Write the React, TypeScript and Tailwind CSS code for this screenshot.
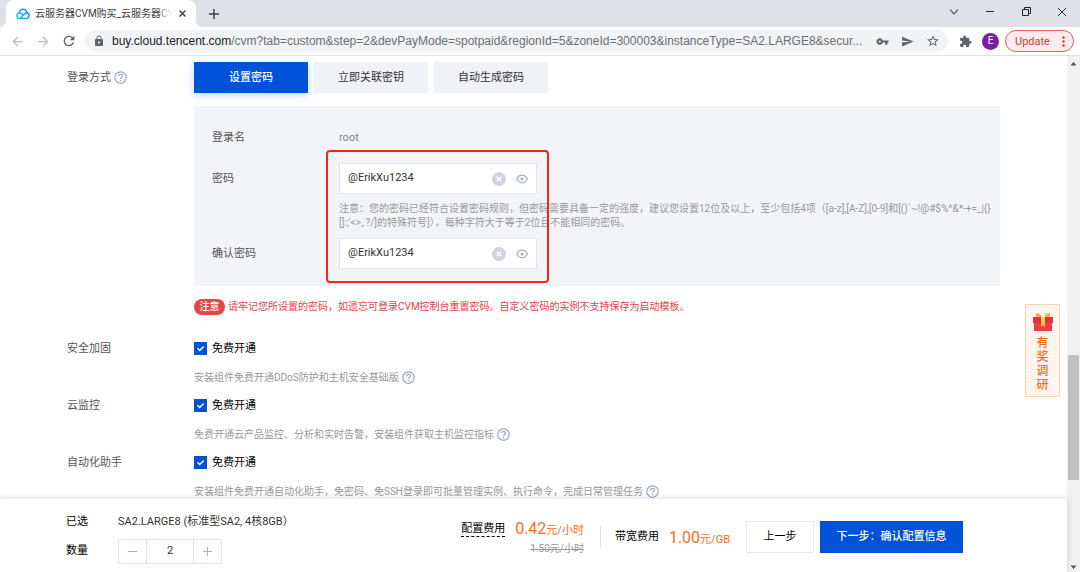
import { useState } from 'react';
import {
  MdArrowBack,
  MdArrowForward,
  MdExtension,
  MdLock,
  MdRefresh,
  MdSend,
  MdStarBorder,
  MdVpnKey,
} from 'react-icons/md';

const loginTabs = ['设置密码', '立即关联密钥', '自动生成密码'];

const services = [
  { name: '安全加固', note: '安装组件免费开通DDoS防护和主机安全基础版' },
  { name: '云监控', note: '免费开通云产品监控、分析和实时告警，安装组件获取主机监控指标' },
  { name: '自动化助手', note: '安装组件免费开通自动化助手，免密码、免SSH登录即可批量管理实例、执行命令，完成日常管理任务' },
];

function CloudLogo() {
  return (
    <svg width="14" height="12" viewBox="0 0 28 24" fill="none" className="shrink-0">
      <defs>
        <linearGradient id="cloud" x1="0" y1="24" x2="28" y2="0" gradientUnits="userSpaceOnUse">
          <stop offset="0" stopColor="#1fd0f5" />
          <stop offset="1" stopColor="#1672f3" />
        </linearGradient>
      </defs>
      <path
        d="M6.500 10C7 5.500 10 2.500 14 2.500s7 2.500 7.500 7c3 .5 4.500 2.800 4.500 5.500 0 3.500-2.200 6-5.500 6H7.500C4 21 2 18.500 2 15.500 2 12 4 10 7 10c2.500 0 4 1 5.500 2.500L15 15M8 20.500l9.500-9C18.500 10.500 20 9.800 21.500 9.800"
        stroke="url(#cloud)"
        strokeWidth="3"
        strokeLinejoin="round"
      />
    </svg>
  );
}

function HelpIcon() {
  return (
    <svg width="13" height="13" viewBox="0 0 26 26" fill="none" stroke="#a3abc2" strokeWidth="2.5" className="shrink-0">
      <circle cx="13" cy="13" r="11.500" />
      <path d="M9 10.500C9 8 10.800 6.500 13 6.500s4 1.500 4 3.700c0 3-4 2.800-4 5.800" />
      <path d="M13 18v2.500" />
    </svg>
  );
}

function TitleBar() {
  return (
    <div className="flex h-[27px] items-stretch bg-[#dee1e6] pl-1.5">
      <div className="relative flex w-[190px] items-center rounded-t-lg bg-white pl-2.5 pr-2">
        <svg width="6" height="6" viewBox="0 0 6 6" className="absolute bottom-0 -left-1.5">
          <path d="M6 0v6H0a6 6 0 0 0 6-6z" fill="#fff" />
        </svg>
        <svg width="6" height="6" viewBox="0 0 6 6" className="absolute bottom-0 -right-1.5">
          <path d="M0 0v6h6a6 6 0 0 1-6-6z" fill="#fff" />
        </svg>
        <CloudLogo />
        <div className="relative ml-[5px] mr-1 flex-1 overflow-hidden text-[10px] whitespace-nowrap text-[#3c4043]">
          云服务器CVM购买_云服务器CVM
          <div className="absolute inset-y-0 right-0 w-4 bg-linear-to-r from-transparent to-white" />
        </div>
        <button aria-label="关闭标签页" className="flex h-4 w-3 items-center justify-center">
          <svg width="7" height="7" viewBox="0 0 7 7" stroke="#3c4043" strokeWidth="1.400">
            <path d="M.5.5l6 6M6.500.5l-6 6" />
          </svg>
        </button>
      </div>
      <button aria-label="新标签页" className="flex w-9 items-center justify-center">
        <svg width="10" height="10" viewBox="0 0 10 10" stroke="#3c4043" strokeWidth="1.500">
          <path d="M5 0v10M0 5h10" />
        </svg>
      </button>
      <div className="ml-auto flex h-[23px] text-[#202124]">
        <button aria-label="搜索标签页" className="flex w-9 items-center justify-center">
          <svg width="10" height="6" viewBox="0 0 10 6" fill="none" stroke="#5f6368" strokeWidth="1.200">
            <path d="M1 .5l4 4.500L9 .5" />
          </svg>
        </button>
        <button aria-label="最小化" className="flex w-9 items-center justify-center">
          <svg width="8" height="8" viewBox="0 0 8 8" stroke="currentColor">
            <path d="M0 3.500h8" />
          </svg>
        </button>
        <button aria-label="还原" className="flex w-9 items-center justify-center">
          <svg width="9" height="9" viewBox="0 0 9 9" fill="none" stroke="currentColor">
            <path d="M.5 2.500h6v6h-6zM2.500 2.500v-2h6v6h-2" />
          </svg>
        </button>
        <button aria-label="关闭" className="flex w-9 items-center justify-center">
          <svg width="8" height="8" viewBox="0 0 8 8" stroke="currentColor" strokeWidth=".9">
            <path d="M0 0l8 8M8 0L0 8" />
          </svg>
        </button>
      </div>
    </div>
  );
}

function Toolbar() {
  return (
    <div className="flex h-[29px] items-center border-b border-[#dfe1e4] bg-white pr-1.5 pl-1 text-[#5f6368]">
      <button aria-label="后退" className="flex w-[26px] justify-center text-[#b7babd]">
        <MdArrowBack size={15} />
      </button>
      <button aria-label="前进" className="flex w-[26px] justify-center text-[#b7babd]">
        <MdArrowForward size={15} />
      </button>
      <button aria-label="刷新" className="flex w-[26px] justify-center">
        <MdRefresh size={16} />
      </button>
      <div className="ml-[3px] flex h-[22px] min-w-0 flex-1 items-center rounded-full bg-[#f1f3f4] px-2">
        <MdLock size={12} className="shrink-0" />
        <div className="ml-[7px] min-w-0 flex-1 truncate font-['Liberation_Sans',sans-serif] text-xs text-[#6b6f73]">
          <span className="text-[#202124]">buy.cloud.tencent.com</span>
          /cvm?tab=custom&amp;step=2&amp;devPayMode=spotpaid&amp;regionId=5&amp;zoneId=300003&amp;instanceType=SA2.LARGE8&amp;secur...
        </div>
        <div className="ml-2 flex items-center gap-3">
          <button aria-label="密码">
            <MdVpnKey size={13} />
          </button>
          <button aria-label="分享">
            <MdSend size={13} />
          </button>
          <button aria-label="收藏">
            <MdStarBorder size={14} />
          </button>
        </div>
      </div>
      <button aria-label="扩展程序" className="ml-[11px]">
        <MdExtension size={13} />
      </button>
      <button className="ml-2.5 size-[17px] rounded-full bg-[#7b1fa2] text-[10px] leading-none text-white">E</button>
      <button className="ml-1.5 flex h-[22px] w-[69px] items-center justify-between rounded-full border border-[#d9655d] bg-[#fcebea] pr-2 pl-[9px] text-[11px] text-[#d23f36]">
        <span className="pt-0.5">Update</span>
        <svg width="3" height="11" viewBox="0 0 3 11" fill="currentColor">
          <circle cx="1.500" cy="1.500" r="1.200" />
          <circle cx="1.500" cy="5.500" r="1.200" />
          <circle cx="1.500" cy="9.500" r="1.200" />
        </svg>
      </button>
    </div>
  );
}

function PasswordField({ id }: { id: string }) {
  const [value, setValue] = useState('@ErikXu1234');

  return (
    <div className="flex h-[31px] w-[198px] items-center border border-[#e1e4ec] bg-white pr-2 pl-2">
      <input
        id={id}
        type="text"
        value={value}
        onChange={(e) => setValue(e.target.value)}
        className="min-w-0 flex-1 text-[11px] text-[#333] outline-none"
      />
      <button aria-label="清除" onClick={() => setValue('')}>
        <svg width="14" height="14" viewBox="0 0 14 14">
          <circle cx="7" cy="7" r="7" fill="#cfd5de" />
          <path d="M4.700 4.700l4.600 4.600M9.300 4.700l-4.600 4.600" stroke="#fff" strokeWidth="1.500" />
        </svg>
      </button>
      <button aria-label="显示密码" className="ml-2.5">
        <svg width="12" height="10" viewBox="0 0 12 10" fill="none" stroke="#a3b1c6" strokeWidth="1.200">
          <path d="M.7 5C2 2.400 3.800 1.200 6 1.200S10 2.400 11.300 5C10 7.600 8.200 8.800 6 8.800S2 7.600.7 5z" />
          <circle cx="6" cy="5" r="1.500" fill="#a3b1c6" stroke="none" />
        </svg>
      </button>
    </div>
  );
}

function LoginPanel() {
  return (
    <div className="relative mt-[13px] flex h-[180px] flex-col bg-[#f3f4f8] pt-[15px] pl-[18px]">
      <div className="flex h-8 items-center pt-0.5">
        <span className="w-[127px]">登录名</span>
        <span className="text-[#888]">root</span>
      </div>
      <div className="mt-2.5 flex items-center">
        <label htmlFor="password" className="w-[127px] pt-0.5">密码</label>
        <PasswordField id="password" />
      </div>
      <p className="mt-2 ml-[127px] text-[10px] leading-[14px] whitespace-nowrap text-[#999]">
        注意：您的密码已经符合设置密码规则，但密码需要具备一定的强度，建议您设置12位及以上，至少包括4项（[a-z],[A-Z],[0-9]和[()`~!@#$%^&amp;*-+=_|{'{}'}
        <br />
        []:;'&lt;&gt;,.?/]的特殊符号]），每种字符大于等于2位且不能相同的密码。
      </p>
      <div className="mt-2 flex items-center">
        <label htmlFor="confirm" className="w-[127px] pt-0.5">确认密码</label>
        <PasswordField id="confirm" />
      </div>
      <div className="pointer-events-none absolute top-11 left-[132px] h-[133px] w-[223px] rounded-sm border-2 border-[#fb2318]" />
    </div>
  );
}

function ServiceRow({ name, note }: { name: string; note: string }) {
  return (
    <div className="flex h-[57px]">
      <div className="h-5 w-[127px] pt-px leading-5">{name}</div>
      <div>
        <label className="relative flex h-5 items-center gap-[5px] text-black">
          <input type="checkbox" defaultChecked className="peer size-[13px] appearance-none border border-[#0052d9] checked:bg-[#0052d9]" />
          <svg
            width="13"
            height="13"
            viewBox="0 0 13 13"
            fill="none"
            stroke="#fff"
            strokeWidth="1.500"
            className="pointer-events-none absolute left-0 hidden peer-checked:block"
          >
            <path d="M3.500 6.300l2.200 2.200L9.700 4.500" />
          </svg>
          <span className="pt-0.5">免费开通</span>
        </label>
        <p className="mt-[9px] flex h-5 items-center gap-[3px] text-[10px] whitespace-nowrap text-[#999]">
          {note}
          <HelpIcon />
        </p>
      </div>
    </div>
  );
}

function Gift() {
  return (
    <svg width="20" height="20" viewBox="0 0 20 20">
      <path d="M9 5C7 1 4 0 3 2S3 6 9 6zM11 5c2-4 5-5 6-3s0 4-6 4z" fill="#f9b524" />
      <path d="M1 10h18v9H1z" fill="#f5394b" />
      <path d="M0 5h20v6H0z" fill="#e3304a" />
      <path d="M8 5h4v10l-2-2-2 2z" fill="#fdd23f" />
    </svg>
  );
}

function OrderBar() {
  const [count, setCount] = useState(2);

  return (
    <footer className="relative flex h-[73px] shrink-0 items-center bg-white pt-0.5 pr-[104px] pl-[66px] text-black shadow-[0_-1px_6px_rgba(54,70,110,0.18)]">
      <div className="flex flex-col gap-2 pt-0.5">
        <div className="flex h-5 items-center pt-0.5">
          <span className="w-[52px]">已选</span>
          <span className="text-[#333]">SA2.LARGE8 (标准型SA2, 4核8GB）</span>
        </div>
        <div className="flex h-[25px] items-center">
          <label htmlFor="count" className="w-[52px]">数量</label>
          <div className="flex h-[25px] border border-[#e1e6ee] text-[#333]">
            <button aria-label="减少" onClick={() => setCount(count - 1)} className="flex w-[27px] items-center justify-center">
              <svg width="9" height="9" viewBox="0 0 9 9" stroke="#a3b1c6"><path d="M0 4.500h9" /></svg>
            </button>
            <input
              id="count"
              value={count}
              onChange={(e) => setCount(Number(e.target.value) || 1)}
              className="w-12 border-x border-[#e1e6ee] text-center text-[11px] outline-none"
            />
            <button aria-label="增加" onClick={() => setCount(count + 1)} className="flex w-[27px] items-center justify-center">
              <svg width="9" height="9" viewBox="0 0 9 9" stroke="#a3b1c6"><path d="M0 4.500h9M4.500 0v9" /></svg>
            </button>
          </div>
        </div>
      </div>

      <div className="ml-auto flex items-center">
        <div className="flex items-start gap-2.5 pt-0.5">
          <span className="mt-0.5 border-b border-dashed border-black leading-[15px]">配置费用</span>
          <div className="flex flex-col items-end text-[#ff6a1a]">
            <div className="text-[11px] leading-5">
              <span className="text-base leading-5">0.42</span>元/小时
            </div>
            <del className="text-[10px] leading-4 text-[#999]">1.50元/小时</del>
          </div>
        </div>
        <div className="ml-4 h-[22px] w-px bg-[#dcdfe6]" />
        <div className="ml-3.5 flex items-center gap-2.5 pt-0.5">
          <span>带宽费用</span>
          <div className="pt-0.5 text-[11px] leading-5 text-[#ff6a1a]">
            <span className="text-base leading-5">1.00</span>元/GB
          </div>
        </div>
        <button className="ml-4 h-8 w-[68px] border border-[#e4e7ee] bg-white pt-0.5">上一步</button>
        <button className="ml-1.5 h-8 w-[143px] bg-[#0052d9] pt-0.5 font-medium text-white">下一步：确认配置信息</button>
      </div>
    </footer>
  );
}

function Scrollbar() {
  return (
    <div className="flex w-[13px] shrink-0 flex-col items-center bg-[#f1f1f1]">
      <svg width="13" height="16" viewBox="0 0 13 16" fill="#505050"><path d="M3.500 9.500L6.500 6l3 3.500z" /></svg>
      <div className="grow-[284]" />
      <div className="h-[125px] w-[11px] bg-[#c1c1c1]" />
      <div className="grow-[76]" />
      <svg width="13" height="16" viewBox="0 0 13 16" fill="#505050"><path d="M3.500 9.500L6.500 13l3-3.500z" /></svg>
    </div>
  );
}

export default function App() {
  const [activeTab, setActiveTab] = useState('设置密码');

  return (
    <div className="flex h-screen flex-col overflow-hidden bg-white font-[Roboto,'Noto_Sans_CJK_SC',sans-serif] text-[11px] text-[#555]">
      <TitleBar />
      <Toolbar />
      <div className="flex min-h-0 flex-1">
        <div className="relative flex min-w-0 flex-1 flex-col">
          <main className="min-h-0 flex-1 overflow-hidden px-[67px] pt-1.5">
            <div className="flex">
              <div className="flex h-[31px] w-[127px] shrink-0 items-center gap-[3px]">
                <span className="pt-0.5">登录方式</span>
                <HelpIcon />
              </div>
              <div className="min-w-0 flex-1">
                <div className="flex gap-1.5">
                  {loginTabs.map((tab) => (
                    <button
                      key={tab}
                      onClick={() => setActiveTab(tab)}
                      className={`h-[31px] w-[114px] pt-0.5 ${
                        activeTab === tab
                          ? 'bg-[#0052d9] font-medium text-white shadow-[0_2px_8px_rgba(0,82,217,0.25)]'
                          : 'bg-[#f1f2f6] text-[#333]'
                      }`}
                    >
                      {tab}
                    </button>
                  ))}
                </div>
                <LoginPanel />
                <div className="mt-3 flex h-[17px] items-center gap-[3px] text-[10px] text-[#e54545]">
                  <span className="flex h-4 w-[31px] items-center justify-center rounded-full bg-[#e54545] font-medium text-white">注意</span>
                  请牢记您所设置的密码，如遗忘可登录CVM控制台重置密码。自定义密码的实例不支持保存为启动模板。
                </div>
              </div>
            </div>
            <div className="mt-[23px]">
              {services.map((service) => (
                <ServiceRow key={service.name} name={service.name} note={service.note} />
              ))}
            </div>
          </main>
          <button className="absolute top-[248px] right-[7px] flex h-[93px] w-[35px] flex-col items-center border border-[#fbd3b0] bg-[#fff5ee] pt-[7px] text-xs leading-[14px] font-medium text-[#ff6a1a]">
            <Gift />
            <span className="mt-1 w-3">有奖调研</span>
          </button>
          <OrderBar />
        </div>
        <Scrollbar />
      </div>
    </div>
  );
}
